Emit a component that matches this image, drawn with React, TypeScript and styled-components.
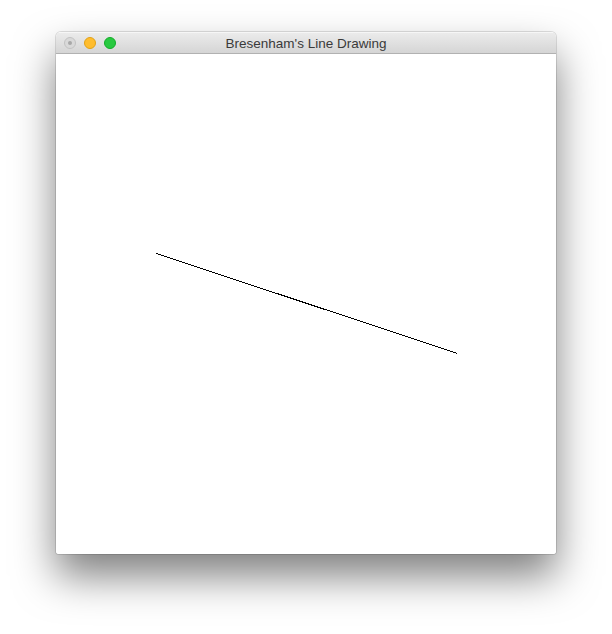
import React from "react";
import styled, { createGlobalStyle } from "styled-components";

const Global = createGlobalStyle`
  html, body { margin: 0; padding: 0; background: #ffffff; }
  body { width: 612px; height: 634px; overflow: hidden; }
`;

const Page = styled.div`
  width: 612px;
  height: 634px;
  padding: 32px 0 0 56px;
  box-sizing: border-box;
`;

const Window = styled.div`
  width: 500px;
  display: flex;
  flex-direction: column;
  border-radius: 5px 5px 3px 3px;
  overflow: hidden;
  box-shadow: 0 22px 42px rgba(0, 0, 0, 0.5), 0 0 0 1px rgba(0, 0, 0, 0.12);
`;

const TitleBar = styled.div`
  height: 22px;
  box-sizing: border-box;
  display: flex;
  align-items: center;
  position: relative;
  background: linear-gradient(#ebebeb, #d5d5d5);
  border-bottom: 1px solid #b1b1b1;
  border-top: 1px solid #f6f6f6;
`;

const Lights = styled.div`
  display: flex;
  gap: 8px;
  padding-left: 8px;
`;

const Light = styled.div<{ $color: string; $border: string }>`
  width: 12px;
  height: 12px;
  border-radius: 50%;
  box-sizing: border-box;
  background: ${(p) => p.$color};
  border: 1px solid ${(p) => p.$border};
  display: flex;
  align-items: center;
  justify-content: center;
`;

const Dot = styled.div`
  width: 4px;
  height: 4px;
  border-radius: 50%;
  background: #a8a8a8;
`;

const Title = styled.div`
  position: absolute;
  left: 0;
  right: 0;
  text-align: center;
  font-family: "Liberation Sans", Arial, sans-serif;
  font-size: 13.5px;
  color: #3a3a3a;
  pointer-events: none;
`;

const Canvas = styled.svg`
  display: block;
  width: 500px;
  height: 500px;
  background: #ffffff;
`;

export default function App() {
  return (
    <>
      <Global />
      <Page>
        <Window>
          <TitleBar>
            <Lights>
              <Light $color="#d9d9d9" $border="#c2c2c2">
                <Dot />
              </Light>
              <Light $color="#ffbd2e" $border="#e1a116" />
              <Light $color="#28c940" $border="#12ac28" />
            </Lights>
            <Title>Bresenham's Line Drawing</Title>
          </TitleBar>
          <Canvas viewBox="0 0 500 500">
            <line
              x1={100.5}
              y1={199.5}
              x2={401.5}
              y2={299.5}
              stroke="#000"
              strokeWidth={1}
              shapeRendering="crispEdges"
            />
          </Canvas>
        </Window>
      </Page>
    </>
  );
}
